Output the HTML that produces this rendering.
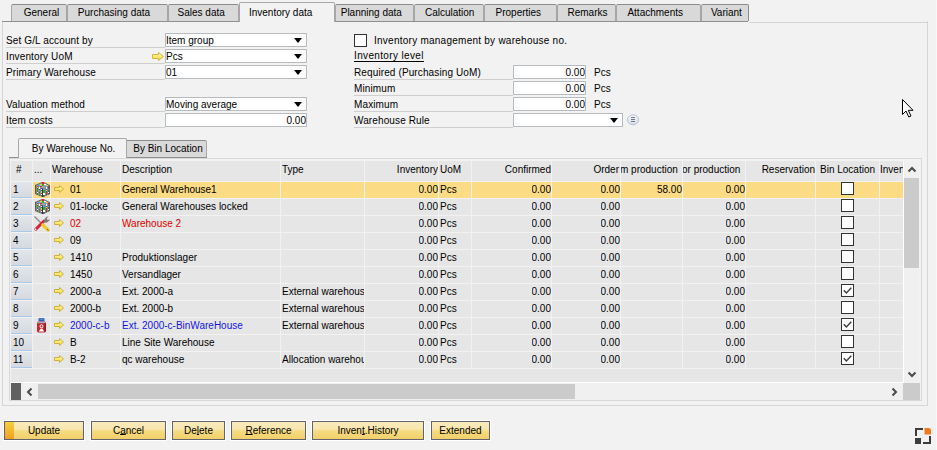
<!DOCTYPE html>
<html><head><meta charset="utf-8">
<style>
*{box-sizing:border-box;margin:0;padding:0}
html,body{width:937px;height:450px;overflow:hidden;background:#f2f2f2;font-family:"Liberation Sans",sans-serif;font-size:10px;color:#000}
.a{position:absolute}
.t{position:absolute;white-space:nowrap;line-height:14px;height:14px}
.tab{position:absolute;top:4px;height:17px;background:#d9d9d9;border:1px solid #a6a6a6;border-top-color:#8c8c8c;border-bottom:none;border-radius:2px 2px 0 0;text-align:center;line-height:16px}
.tabact{top:2px;height:20px;background:#f2f2f2;border-color:#a8a8a8;line-height:20px}
.lbl{position:absolute;left:6px;width:159px;height:14px;border-bottom:1px solid #cfcfcf;line-height:14px;white-space:nowrap;letter-spacing:0.12px}
.inp{position:absolute;height:14px;background:#fff;border:1px solid #b6bcc0;line-height:14px;padding-left:0px;white-space:nowrap;overflow:hidden}
.dd{position:absolute;width:0;height:0;border-left:4.5px solid transparent;border-right:4.5px solid transparent;border-top:5px solid #000}
.num{text-align:right;padding-right:0px}
.hd{position:absolute;top:161px;height:20px;background:#e6e6e6;line-height:20px}
.c{position:absolute;white-space:nowrap;overflow:hidden;line-height:16px;height:16px}
.r{text-align:right}
.btn{position:absolute;top:421px;height:19px;border:1px solid #636370;background:linear-gradient(#faebbd,#f8e6ac 42%,#f5da80 55%,#f2d06a);text-align:center;line-height:17px;box-shadow:0 0 0 1px #fff}
.rn{left:11px;width:21px;height:16px;background:linear-gradient(#e2e5e9,#d6dae0);border-bottom:1px solid #a9c9ea}
.cb{width:13px;height:13px;border:1px solid #333;background:#fff}
u{text-decoration:underline;text-underline-offset:0px;text-decoration-thickness:1px}
</style></head>
<body>
<svg width="0" height="0" style="position:absolute"><defs>
<linearGradient id="ag" x1="0" y1="0" x2="0" y2="1"><stop offset="0" stop-color="#fff8c0"/><stop offset="1" stop-color="#f6d82a"/></linearGradient>
</defs></svg>
<!-- panel -->
<div class="a" style="left:2px;top:21px;width:926px;height:385px;border:1px solid #d6d6d6;border-top:none"></div>
<div class="a" style="left:2px;top:21px;width:746px;height:1px;background:#8f8f8f"></div>
<div class="a" style="left:749px;top:22px;width:179px;height:1px;background:#d4d4d4"></div>

<!-- top tabs -->
<div class="tab" style="left:11px;width:56px"><span style="position:relative;left:2.5px">General</span></div>
<div class="tab" style="left:67px;width:101px"><span style="position:relative;left:-3.5px">Purchasing data</span></div>
<div class="tab" style="left:168px;width:71px"><span style="position:relative;left:-2.3px">Sales data</span></div>
<div class="tab" style="left:335px;width:79px"><span style="position:relative;left:-3.2px">Planning data</span></div>
<div class="tab" style="left:414px;width:70px"><span style="position:relative;left:0.7px">Calculation</span></div>
<div class="tab" style="left:484px;width:73px"><span style="position:relative;left:-2.2px">Properties</span></div>
<div class="tab" style="left:557px;width:59px"><span style="position:relative;left:1.0px">Remarks</span></div>
<div class="tab" style="left:616px;width:85px"><span style="position:relative;left:-3.3px">Attachments</span></div>
<div class="tab" style="left:701px;width:48px;border-right-color:#8c8c8c"><span style="position:relative;left:1.4px">Variant</span></div>
<div class="tab tabact" style="left:239px;width:96px"><span style="position:relative;left:-6.4px">Inventory data</span></div>

<!-- left form -->
<div class="lbl" style="top:34px">Set G/L account by</div>
<div class="lbl" style="top:50px">Inventory UoM</div>
<div class="lbl" style="top:66px">Primary Warehouse</div>
<div class="lbl" style="top:98px">Valuation method</div>
<div class="lbl" style="top:114px">Item costs</div>

<div class="inp" style="left:165px;top:33px;width:142px">Item group</div>
<div class="dd" style="left:294px;top:38px"></div>
<div class="inp" style="left:165px;top:49px;width:142px">Pcs</div>
<div class="dd" style="left:294px;top:54px"></div>
<div class="inp" style="left:165px;top:65px;width:142px">01</div>
<div class="dd" style="left:294px;top:70px"></div>
<div class="inp" style="left:165px;top:97px;width:142px">Moving average</div>
<div class="dd" style="left:294px;top:102px"></div>
<div class="inp num" style="left:165px;top:113px;width:142px">0.00</div>
<svg class="a" style="left:152px;top:52px" width="13" height="10" viewBox="0 0 13 10"><path d="M0.5 2.5H6.5V0.5L11.5 4.5L6.5 8.5V6.5H0.5Z" fill="url(#ag)" stroke="#d2b53a" stroke-width="1" stroke-linejoin="round"/></svg>

<!-- right form -->
<div class="a" style="left:354px;top:34px;width:13px;height:13px;border:1px solid #333;background:#fff"></div>
<div class="t" style="left:374px;top:34px;letter-spacing:0.25px">Inventory management by warehouse no.</div>
<div class="t" style="left:354px;top:49px"><span style="border-bottom:1px solid #000;display:inline-block;line-height:11px;height:12px;width:70px;letter-spacing:0.35px">Inventory level</span></div>
<div class="lbl" style="left:354px;width:159px;top:66px">Required (Purchasing UoM)</div>
<div class="lbl" style="left:354px;width:159px;top:82px">Minimum</div>
<div class="lbl" style="left:354px;width:159px;top:98px">Maximum</div>
<div class="lbl" style="left:354px;width:159px;top:114px">Warehouse Rule</div>
<div class="inp num" style="left:513px;top:65px;width:73px">0.00</div>
<div class="inp num" style="left:513px;top:81px;width:73px">0.00</div>
<div class="inp num" style="left:513px;top:97px;width:73px">0.00</div>
<div class="t" style="left:594px;top:66px">Pcs</div>
<div class="t" style="left:594px;top:82px">Pcs</div>
<div class="t" style="left:594px;top:98px">Pcs</div>
<div class="inp" style="left:513px;top:113px;width:110px"></div>
<div class="dd" style="left:610px;top:118px"></div>
<svg class="a" style="left:627px;top:114px" width="13" height="12" viewBox="0 0 13 12"><defs><linearGradient id="cg" x1="0" y1="0" x2="0" y2="1"><stop offset="0" stop-color="#f8f9fc"/><stop offset="1" stop-color="#d4dcec"/></linearGradient></defs><ellipse cx="6" cy="5.8" rx="5.5" ry="5" fill="url(#cg)" stroke="#b4c0d6" stroke-width="1"/><rect x="4" y="3" width="4" height="1" fill="#777"/><rect x="4" y="5" width="4" height="1" fill="#777"/><rect x="4" y="7" width="4" height="1" fill="#777"/></svg>

<!-- cursor -->
<svg class="a" style="left:901px;top:98px" width="14" height="21" viewBox="0 0 14 21"><path d="M1.5 1.5V16.5L5 13L7.8 19L10 18L7.3 12.3H12Z" fill="#fff" stroke="#000" stroke-width="1" stroke-linejoin="round"/></svg>

<!-- sub tabs -->
<div class="a" style="left:9px;top:157px;width:198px;height:1px;background:#8f8f8f"></div>
<div class="tab" style="left:125px;top:140px;width:82px;height:17px;line-height:16px"><span style="position:relative;left:2px">By Bin Location</span></div>
<div class="tab tabact" style="left:18px;top:138px;width:109px;height:20px;line-height:20px"><span style="position:relative;left:1px">By Warehouse No.</span></div>

<!-- grid frame -->
<div class="a" style="left:9px;top:158px;width:913px;height:243px;border:1px solid #d8d8d8;background:#f2f2f2"></div>
<div class="a" style="left:11px;top:161px;width:892px;height:222px;background:#f2f2f2"></div>
<!--GRID-->
<div class="a" style="left:11px;top:161px;width:892px;height:222px;background:#e6e6e6"></div>
<div class="a" style="left:11px;top:181px;width:892px;height:1px;background:#f2f2f2"></div>
<div class="a" style="left:11px;top:198px;width:892px;height:1px;background:#f2f2f2"></div>
<div class="a" style="left:11px;top:215px;width:892px;height:1px;background:#f2f2f2"></div>
<div class="a" style="left:11px;top:232px;width:892px;height:1px;background:#f2f2f2"></div>
<div class="a" style="left:11px;top:249px;width:892px;height:1px;background:#f2f2f2"></div>
<div class="a" style="left:11px;top:266px;width:892px;height:1px;background:#f2f2f2"></div>
<div class="a" style="left:11px;top:283px;width:892px;height:1px;background:#f2f2f2"></div>
<div class="a" style="left:11px;top:300px;width:892px;height:1px;background:#f2f2f2"></div>
<div class="a" style="left:11px;top:317px;width:892px;height:1px;background:#f2f2f2"></div>
<div class="a" style="left:11px;top:334px;width:892px;height:1px;background:#f2f2f2"></div>
<div class="a" style="left:11px;top:351px;width:892px;height:1px;background:#f2f2f2"></div>
<div class="a" style="left:11px;top:368px;width:892px;height:1px;background:#f2f2f2"></div>
<div class="a" style="left:33px;top:182px;width:870px;height:16px;background:#fcdb85"></div>
<div class="a" style="left:32px;top:161px;width:1px;height:208px;background:#f2f2f2"></div>
<div class="a" style="left:50px;top:161px;width:1px;height:208px;background:#f2f2f2"></div>
<div class="a" style="left:120px;top:161px;width:1px;height:208px;background:#f2f2f2"></div>
<div class="a" style="left:280px;top:161px;width:1px;height:208px;background:#f2f2f2"></div>
<div class="a" style="left:364px;top:161px;width:1px;height:208px;background:#f2f2f2"></div>
<div class="a" style="left:438px;top:161px;width:1px;height:208px;background:#f2f2f2"></div>
<div class="a" style="left:471px;top:161px;width:1px;height:208px;background:#f2f2f2"></div>
<div class="a" style="left:551px;top:161px;width:1px;height:208px;background:#f2f2f2"></div>
<div class="a" style="left:620px;top:161px;width:1px;height:208px;background:#f2f2f2"></div>
<div class="a" style="left:682px;top:161px;width:1px;height:208px;background:#f2f2f2"></div>
<div class="a" style="left:745px;top:161px;width:1px;height:208px;background:#f2f2f2"></div>
<div class="a" style="left:815px;top:161px;width:1px;height:208px;background:#f2f2f2"></div>
<div class="a" style="left:879px;top:161px;width:1px;height:208px;background:#f2f2f2"></div>
<div class="a rn" style="top:182px"></div>
<div class="a rn" style="top:199px"></div>
<div class="a rn" style="top:216px"></div>
<div class="a rn" style="top:233px"></div>
<div class="a rn" style="top:250px"></div>
<div class="a rn" style="top:267px"></div>
<div class="a rn" style="top:284px"></div>
<div class="a rn" style="top:301px"></div>
<div class="a rn" style="top:318px"></div>
<div class="a rn" style="top:335px"></div>
<div class="a rn" style="top:352px"></div>
<div class="c " style="left:16px;top:162px;">#</div>
<div class="c " style="left:34px;top:162px;">...</div>
<div class="c " style="left:52px;top:162px;">Warehouse</div>
<div class="c " style="left:122px;top:162px;">Description</div>
<div class="c " style="left:282px;top:162px;">Type</div>
<div class="c " style="left:440px;top:162px;">UoM</div>
<div class="c " style="left:820px;top:162px;">Bin Location</div>
<div class="c " style="left:880px;top:162px;">Inven</div>
<div class="c" style="left:552px;top:162px;width:68px;display:flex;justify-content:flex-end"><span style="position:relative;left:-1px">Order</span></div>
<div class="c" style="left:621px;top:162px;width:61px"><span style="position:relative;left:-1px">m production</span></div>
<div class="c" style="left:683px;top:162px;width:62px"><span style="position:relative;left:-1px">or production</span></div>
<div class="c r " style="right:499px;top:162px;">Inventory</div>
<div class="c r " style="right:386px;top:162px;">Confirmed</div>
<div class="c r " style="right:122px;top:162px;">Reservation</div>
<div class="c " style="left:13px;top:182px;">1</div>
<svg class="a" style="left:35px;top:182px" width="15" height="15" viewBox="0 0 15 15"><path d="M0 3L8 -0.3L15 3.3V12L8 15.3L0 12Z" fill="#5a5a5a"/><path d="M1 3.5L8 0.5L14 3.5L8 6.5Z" fill="#a8a8a8"/><rect x="1" y="4" width="1" height="8" fill="#8a8a8a"/><rect x="3" y="5" width="1" height="8" fill="#909090"/><rect x="5" y="5" width="1" height="9" fill="#8a8a8a"/><rect x="10" y="5" width="1" height="9" fill="#8a8a8a"/><rect x="12" y="4" width="1" height="9" fill="#8a8a8a"/><path d="M7.5 6.5V15" stroke="#2e2e2e" stroke-width="0.8"/><rect x="2" y="5" width="1" height="1" fill="#e8d048"/><rect x="2" y="7" width="1" height="2" fill="#28b028"/><rect x="2" y="10" width="1" height="1" fill="#ffffff"/><rect x="4" y="5" width="1" height="2" fill="#ffffff"/><rect x="4" y="8" width="1" height="2" fill="#58a0e0"/><rect x="4" y="11" width="1" height="2" fill="#28b028"/><rect x="6" y="7" width="1" height="1" fill="#ffffff"/><rect x="6" y="9" width="1" height="2" fill="#e8d048"/><rect x="6" y="12" width="1" height="1" fill="#ffffff"/><rect x="8" y="6" width="2" height="2" fill="#58a0e0"/><rect x="8" y="8" width="2" height="3" fill="#28b028"/><rect x="8" y="11" width="2" height="2" fill="#ffffff"/><rect x="11" y="5" width="1" height="2" fill="#ffffff"/><rect x="11" y="8" width="1" height="1" fill="#e8d048"/><rect x="11" y="10" width="1" height="2" fill="#e02828"/><rect x="13" y="4" width="1" height="2" fill="#e02828"/><rect x="13" y="7" width="1" height="1" fill="#58a0e0"/><rect x="13" y="10" width="1" height="1" fill="#ffffff"/><rect x="7" y="0" width="2" height="2" fill="#e02828"/><rect x="7" y="2" width="2" height="2" fill="#28b028"/><rect x="5" y="2" width="2" height="1" fill="#e8d048"/><rect x="3" y="3" width="2" height="1" fill="#58a0e0"/><rect x="5" y="4" width="2" height="1" fill="#e02828"/><rect x="9" y="2" width="2" height="1" fill="#ffffff"/><rect x="9" y="4" width="2" height="1" fill="#58a0e0"/><rect x="11" y="3" width="2" height="1" fill="#e8d048"/></svg>
<svg class="a" style="left:53px;top:185px" width="12" height="9"><path d="M1.5 2.5H6.5V0.5L10.5 4L6.5 7.5V5.5H1.5Z" fill="url(#ag)" stroke="#cdb13a" stroke-width="1" stroke-linejoin="round"/></svg>
<div class="c " style="left:70px;top:182px;;width:49px">01</div>
<div class="c " style="left:122px;top:182px;;width:157px">General Warehouse1</div>
<div class="c " style="left:282px;top:182px;width:82px"></div>
<div class="c r " style="right:499px;top:182px;">0.00</div>
<div class="c " style="left:440px;top:182px;">Pcs</div>
<div class="c r " style="right:386px;top:182px;">0.00</div>
<div class="c r " style="right:317px;top:182px;">0.00</div>
<div class="c r " style="right:255px;top:182px;">58.00</div>
<div class="c r " style="right:192px;top:182px;">0.00</div>
<div class="a cb" style="left:841px;top:182px"></div>
<div class="c " style="left:13px;top:199px;">2</div>
<svg class="a" style="left:35px;top:199px" width="15" height="15" viewBox="0 0 15 15"><path d="M0 3L8 -0.3L15 3.3V12L8 15.3L0 12Z" fill="#5a5a5a"/><path d="M1 3.5L8 0.5L14 3.5L8 6.5Z" fill="#a8a8a8"/><rect x="1" y="4" width="1" height="8" fill="#8a8a8a"/><rect x="3" y="5" width="1" height="8" fill="#909090"/><rect x="5" y="5" width="1" height="9" fill="#8a8a8a"/><rect x="10" y="5" width="1" height="9" fill="#8a8a8a"/><rect x="12" y="4" width="1" height="9" fill="#8a8a8a"/><path d="M7.5 6.5V15" stroke="#2e2e2e" stroke-width="0.8"/><rect x="2" y="5" width="1" height="1" fill="#e8d048"/><rect x="2" y="7" width="1" height="2" fill="#28b028"/><rect x="2" y="10" width="1" height="1" fill="#ffffff"/><rect x="4" y="5" width="1" height="2" fill="#ffffff"/><rect x="4" y="8" width="1" height="2" fill="#58a0e0"/><rect x="4" y="11" width="1" height="2" fill="#28b028"/><rect x="6" y="7" width="1" height="1" fill="#ffffff"/><rect x="6" y="9" width="1" height="2" fill="#e8d048"/><rect x="6" y="12" width="1" height="1" fill="#ffffff"/><rect x="8" y="6" width="2" height="2" fill="#58a0e0"/><rect x="8" y="8" width="2" height="3" fill="#28b028"/><rect x="8" y="11" width="2" height="2" fill="#ffffff"/><rect x="11" y="5" width="1" height="2" fill="#ffffff"/><rect x="11" y="8" width="1" height="1" fill="#e8d048"/><rect x="11" y="10" width="1" height="2" fill="#e02828"/><rect x="13" y="4" width="1" height="2" fill="#e02828"/><rect x="13" y="7" width="1" height="1" fill="#58a0e0"/><rect x="13" y="10" width="1" height="1" fill="#ffffff"/><rect x="7" y="0" width="2" height="2" fill="#e02828"/><rect x="7" y="2" width="2" height="2" fill="#28b028"/><rect x="5" y="2" width="2" height="1" fill="#e8d048"/><rect x="3" y="3" width="2" height="1" fill="#58a0e0"/><rect x="5" y="4" width="2" height="1" fill="#e02828"/><rect x="9" y="2" width="2" height="1" fill="#ffffff"/><rect x="9" y="4" width="2" height="1" fill="#58a0e0"/><rect x="11" y="3" width="2" height="1" fill="#e8d048"/></svg>
<svg class="a" style="left:53px;top:202px" width="12" height="9"><path d="M1.5 2.5H6.5V0.5L10.5 4L6.5 7.5V5.5H1.5Z" fill="url(#ag)" stroke="#cdb13a" stroke-width="1" stroke-linejoin="round"/></svg>
<div class="c " style="left:70px;top:199px;;width:49px">01-locke</div>
<div class="c " style="left:122px;top:199px;;width:157px">General Warehouses locked</div>
<div class="c " style="left:282px;top:199px;width:82px"></div>
<div class="c r " style="right:499px;top:199px;">0.00</div>
<div class="c " style="left:440px;top:199px;">Pcs</div>
<div class="c r " style="right:386px;top:199px;">0.00</div>
<div class="c r " style="right:317px;top:199px;">0.00</div>
<div class="c r " style="right:192px;top:199px;">0.00</div>
<div class="a cb" style="left:841px;top:199px"></div>
<div class="c " style="left:13px;top:216px;">3</div>
<svg class="a" style="left:33px;top:215px" width="17" height="17" viewBox="0 0 17 17"><path d="M1.5 1.5L8.5 8.5" stroke="#8a8a8a" stroke-width="1.2"/><path d="M2.8 14.2L11 6" stroke="#dc2034" stroke-width="3" stroke-linecap="round"/><circle cx="2.6" cy="14.4" r="0.8" fill="#fff"/><path d="M9.8 9.8L15 15" stroke="#eec828" stroke-width="3.2" stroke-linecap="round"/><path d="M15.5 15.5L14 14" stroke="#806020" stroke-width="1"/><path d="M10.5 7L12 3.5Q13 1.5 15.5 1.2L13.8 3.3L14.6 5.2L16.8 4Q16.5 6.8 13.5 7.8Z" fill="#787878"/></svg>
<svg class="a" style="left:53px;top:219px" width="12" height="9"><path d="M1.5 2.5H6.5V0.5L10.5 4L6.5 7.5V5.5H1.5Z" fill="url(#ag)" stroke="#cdb13a" stroke-width="1" stroke-linejoin="round"/></svg>
<div class="c " style="left:70px;top:216px;color:#e00000;width:49px">02</div>
<div class="c " style="left:122px;top:216px;color:#e00000;width:157px">Warehouse 2</div>
<div class="c " style="left:282px;top:216px;width:82px"></div>
<div class="c r " style="right:499px;top:216px;">0.00</div>
<div class="c " style="left:440px;top:216px;">Pcs</div>
<div class="c r " style="right:386px;top:216px;">0.00</div>
<div class="c r " style="right:317px;top:216px;">0.00</div>
<div class="c r " style="right:192px;top:216px;">0.00</div>
<div class="a cb" style="left:841px;top:216px"></div>
<div class="c " style="left:13px;top:233px;">4</div>
<svg class="a" style="left:53px;top:236px" width="12" height="9"><path d="M1.5 2.5H6.5V0.5L10.5 4L6.5 7.5V5.5H1.5Z" fill="url(#ag)" stroke="#cdb13a" stroke-width="1" stroke-linejoin="round"/></svg>
<div class="c " style="left:70px;top:233px;;width:49px">09</div>
<div class="c " style="left:122px;top:233px;;width:157px"></div>
<div class="c " style="left:282px;top:233px;width:82px"></div>
<div class="c r " style="right:499px;top:233px;">0.00</div>
<div class="c " style="left:440px;top:233px;">Pcs</div>
<div class="c r " style="right:386px;top:233px;">0.00</div>
<div class="c r " style="right:317px;top:233px;">0.00</div>
<div class="c r " style="right:192px;top:233px;">0.00</div>
<div class="a cb" style="left:841px;top:233px"></div>
<div class="c " style="left:13px;top:250px;">5</div>
<svg class="a" style="left:53px;top:253px" width="12" height="9"><path d="M1.5 2.5H6.5V0.5L10.5 4L6.5 7.5V5.5H1.5Z" fill="url(#ag)" stroke="#cdb13a" stroke-width="1" stroke-linejoin="round"/></svg>
<div class="c " style="left:70px;top:250px;;width:49px">1410</div>
<div class="c " style="left:122px;top:250px;;width:157px">Produktionslager</div>
<div class="c " style="left:282px;top:250px;width:82px"></div>
<div class="c r " style="right:499px;top:250px;">0.00</div>
<div class="c " style="left:440px;top:250px;">Pcs</div>
<div class="c r " style="right:386px;top:250px;">0.00</div>
<div class="c r " style="right:317px;top:250px;">0.00</div>
<div class="c r " style="right:192px;top:250px;">0.00</div>
<div class="a cb" style="left:841px;top:250px"></div>
<div class="c " style="left:13px;top:267px;">6</div>
<svg class="a" style="left:53px;top:270px" width="12" height="9"><path d="M1.5 2.5H6.5V0.5L10.5 4L6.5 7.5V5.5H1.5Z" fill="url(#ag)" stroke="#cdb13a" stroke-width="1" stroke-linejoin="round"/></svg>
<div class="c " style="left:70px;top:267px;;width:49px">1450</div>
<div class="c " style="left:122px;top:267px;;width:157px">Versandlager</div>
<div class="c " style="left:282px;top:267px;width:82px"></div>
<div class="c r " style="right:499px;top:267px;">0.00</div>
<div class="c " style="left:440px;top:267px;">Pcs</div>
<div class="c r " style="right:386px;top:267px;">0.00</div>
<div class="c r " style="right:317px;top:267px;">0.00</div>
<div class="c r " style="right:192px;top:267px;">0.00</div>
<div class="a cb" style="left:841px;top:267px"></div>
<div class="c " style="left:13px;top:284px;">7</div>
<svg class="a" style="left:53px;top:287px" width="12" height="9"><path d="M1.5 2.5H6.5V0.5L10.5 4L6.5 7.5V5.5H1.5Z" fill="url(#ag)" stroke="#cdb13a" stroke-width="1" stroke-linejoin="round"/></svg>
<div class="c " style="left:70px;top:284px;;width:49px">2000-a</div>
<div class="c " style="left:122px;top:284px;;width:157px">Ext. 2000-a</div>
<div class="c " style="left:282px;top:284px;width:82px">External warehouse</div>
<div class="c r " style="right:499px;top:284px;">0.00</div>
<div class="c " style="left:440px;top:284px;">Pcs</div>
<div class="c r " style="right:386px;top:284px;">0.00</div>
<div class="c r " style="right:317px;top:284px;">0.00</div>
<div class="c r " style="right:192px;top:284px;">0.00</div>
<div class="a cb" style="left:841px;top:284px"></div>
<svg class="a" style="left:841px;top:284px" width="13" height="13"><path d="M2.8 6.3L5.4 9L10.3 3.8" fill="none" stroke="#404040" stroke-width="1.5"/></svg>
<div class="c " style="left:13px;top:301px;">8</div>
<svg class="a" style="left:53px;top:304px" width="12" height="9"><path d="M1.5 2.5H6.5V0.5L10.5 4L6.5 7.5V5.5H1.5Z" fill="url(#ag)" stroke="#cdb13a" stroke-width="1" stroke-linejoin="round"/></svg>
<div class="c " style="left:70px;top:301px;;width:49px">2000-b</div>
<div class="c " style="left:122px;top:301px;;width:157px">Ext. 2000-b</div>
<div class="c " style="left:282px;top:301px;width:82px">External warehouse</div>
<div class="c r " style="right:499px;top:301px;">0.00</div>
<div class="c " style="left:440px;top:301px;">Pcs</div>
<div class="c r " style="right:386px;top:301px;">0.00</div>
<div class="c r " style="right:317px;top:301px;">0.00</div>
<div class="c r " style="right:192px;top:301px;">0.00</div>
<div class="a cb" style="left:841px;top:301px"></div>
<div class="c " style="left:13px;top:318px;">9</div>
<svg class="a" style="left:36px;top:318px" width="12" height="16" viewBox="0 0 12 16"><rect x="2.5" y="0" width="6" height="3.4" rx="1" fill="#2f60c0"/><rect x="3.5" y="0.6" width="4" height="1" fill="#6c9ce0"/><path d="M1 5.5Q1 3.8 2.5 3.6H8.5Q10 3.8 10 5.5V13Q10 14.4 8.5 14.4H2.5Q1 14.4 1 13Z" fill="#c02830"/><rect x="1.3" y="3.6" width="8.4" height="1.6" fill="#a8a8b0"/><rect x="8.5" y="5.2" width="1.3" height="8.5" fill="#901820"/><circle cx="5.5" cy="8.3" r="1.5" fill="none" stroke="#fff" stroke-width="1"/><path d="M2.8 13.5L4.5 10.8H6.5L8.2 13.5Z" fill="#fff"/></svg>
<svg class="a" style="left:53px;top:321px" width="12" height="9"><path d="M1.5 2.5H6.5V0.5L10.5 4L6.5 7.5V5.5H1.5Z" fill="url(#ag)" stroke="#cdb13a" stroke-width="1" stroke-linejoin="round"/></svg>
<div class="c " style="left:70px;top:318px;color:#1414e6;width:49px">2000-c-b</div>
<div class="c " style="left:122px;top:318px;color:#1414e6;width:157px">Ext. 2000-c-BinWareHouse</div>
<div class="c " style="left:282px;top:318px;width:82px">External warehouse</div>
<div class="c r " style="right:499px;top:318px;">0.00</div>
<div class="c " style="left:440px;top:318px;">Pcs</div>
<div class="c r " style="right:386px;top:318px;">0.00</div>
<div class="c r " style="right:317px;top:318px;">0.00</div>
<div class="c r " style="right:192px;top:318px;">0.00</div>
<div class="a cb" style="left:841px;top:318px"></div>
<svg class="a" style="left:841px;top:318px" width="13" height="13"><path d="M2.8 6.3L5.4 9L10.3 3.8" fill="none" stroke="#404040" stroke-width="1.5"/></svg>
<div class="c " style="left:13px;top:335px;">10</div>
<svg class="a" style="left:53px;top:338px" width="12" height="9"><path d="M1.5 2.5H6.5V0.5L10.5 4L6.5 7.5V5.5H1.5Z" fill="url(#ag)" stroke="#cdb13a" stroke-width="1" stroke-linejoin="round"/></svg>
<div class="c " style="left:70px;top:335px;;width:49px">B</div>
<div class="c " style="left:122px;top:335px;;width:157px">Line Site Warehouse</div>
<div class="c " style="left:282px;top:335px;width:82px"></div>
<div class="c r " style="right:499px;top:335px;">0.00</div>
<div class="c " style="left:440px;top:335px;">Pcs</div>
<div class="c r " style="right:386px;top:335px;">0.00</div>
<div class="c r " style="right:317px;top:335px;">0.00</div>
<div class="c r " style="right:192px;top:335px;">0.00</div>
<div class="a cb" style="left:841px;top:335px"></div>
<div class="c " style="left:13px;top:352px;">11</div>
<svg class="a" style="left:53px;top:355px" width="12" height="9"><path d="M1.5 2.5H6.5V0.5L10.5 4L6.5 7.5V5.5H1.5Z" fill="url(#ag)" stroke="#cdb13a" stroke-width="1" stroke-linejoin="round"/></svg>
<div class="c " style="left:70px;top:352px;;width:49px">B-2</div>
<div class="c " style="left:122px;top:352px;;width:157px">qc warehouse</div>
<div class="c " style="left:282px;top:352px;width:82px">Allocation warehouse</div>
<div class="c r " style="right:499px;top:352px;">0.00</div>
<div class="c " style="left:440px;top:352px;">Pcs</div>
<div class="c r " style="right:386px;top:352px;">0.00</div>
<div class="c r " style="right:317px;top:352px;">0.00</div>
<div class="c r " style="right:192px;top:352px;">0.00</div>
<div class="a cb" style="left:841px;top:352px"></div>
<svg class="a" style="left:841px;top:352px" width="13" height="13"><path d="M2.8 6.3L5.4 9L10.3 3.8" fill="none" stroke="#404040" stroke-width="1.5"/></svg>
<!--/GRID-->

<!-- scrollbars -->
<div class="a" style="left:903px;top:161px;width:1px;height:222px;background:#fff"></div>
<div class="a" style="left:904px;top:161px;width:15px;height:222px;background:#f0f0f0"></div>
<div class="a" style="left:904px;top:178px;width:15px;height:90px;background:#cbcbcb"></div>
<svg class="a" style="left:907px;top:165px" width="10" height="9"><path d="M1.5 6.5L5 3L8.5 6.5" fill="none" stroke="#4a4a4a" stroke-width="2"/></svg>
<svg class="a" style="left:907px;top:370px" width="10" height="9"><path d="M1.5 2.5L5 6L8.5 2.5" fill="none" stroke="#4a4a4a" stroke-width="2"/></svg>
<div class="a" style="left:11px;top:382px;width:892px;height:1px;background:#fff"></div>
<div class="a" style="left:11px;top:383px;width:892px;height:17px;background:#f0f0f0"></div>
<div class="a" style="left:11px;top:383px;width:10px;height:17px;background:#606060"></div>
<div class="a" style="left:38px;top:384px;width:537px;height:15px;background:#cbcbcb"></div>
<svg class="a" style="left:25px;top:387px" width="9" height="10"><path d="M6.5 1.5L3 5L6.5 8.5" fill="none" stroke="#4a4a4a" stroke-width="2"/></svg>
<svg class="a" style="left:890px;top:387px" width="9" height="10"><path d="M2.5 1.5L6 5L2.5 8.5" fill="none" stroke="#4a4a4a" stroke-width="2"/></svg>
<div class="a" style="left:903px;top:383px;width:17px;height:17px;background:#cbcbcb"></div>
<div class="a" style="left:936px;top:0;width:1px;height:450px;background:#f8f8f8"></div>

<!-- buttons -->
<div class="btn" style="left:4px;width:80px"><div class="a" style="left:0;top:0;width:9px;height:17px;background:linear-gradient(#f8cf40,#f0a020)"></div>Update</div>
<div class="btn" style="left:91px;width:75px">C<u>a</u>ncel</div>
<div class="btn" style="left:172px;width:53px">De<u>l</u>ete</div>
<div class="btn" style="left:231px;width:75px"><u>R</u>eference</div>
<div class="btn" style="left:312px;width:112px">Inven<u>t</u>.History</div>
<div class="btn" style="left:431px;width:59px">Extended</div>

<!-- bottom right icon -->
<svg class="a" style="left:915px;top:428px" width="17" height="17" viewBox="0 0 17 17">
<rect x="0" y="0" width="8" height="2" fill="#3c3c3c"/><rect x="0" y="0" width="2" height="8" fill="#3c3c3c"/>
<path d="M9.5 0H13.5Q16 0 16 2.5V6.5H9.5Z" fill="#f27a1e"/>
<rect x="0" y="10" width="6" height="6" fill="#3c3c3c"/>
<rect x="8" y="14" width="8" height="2" fill="#3c3c3c"/><rect x="14" y="8" width="2" height="8" fill="#3c3c3c"/>
</svg>
</body></html>
